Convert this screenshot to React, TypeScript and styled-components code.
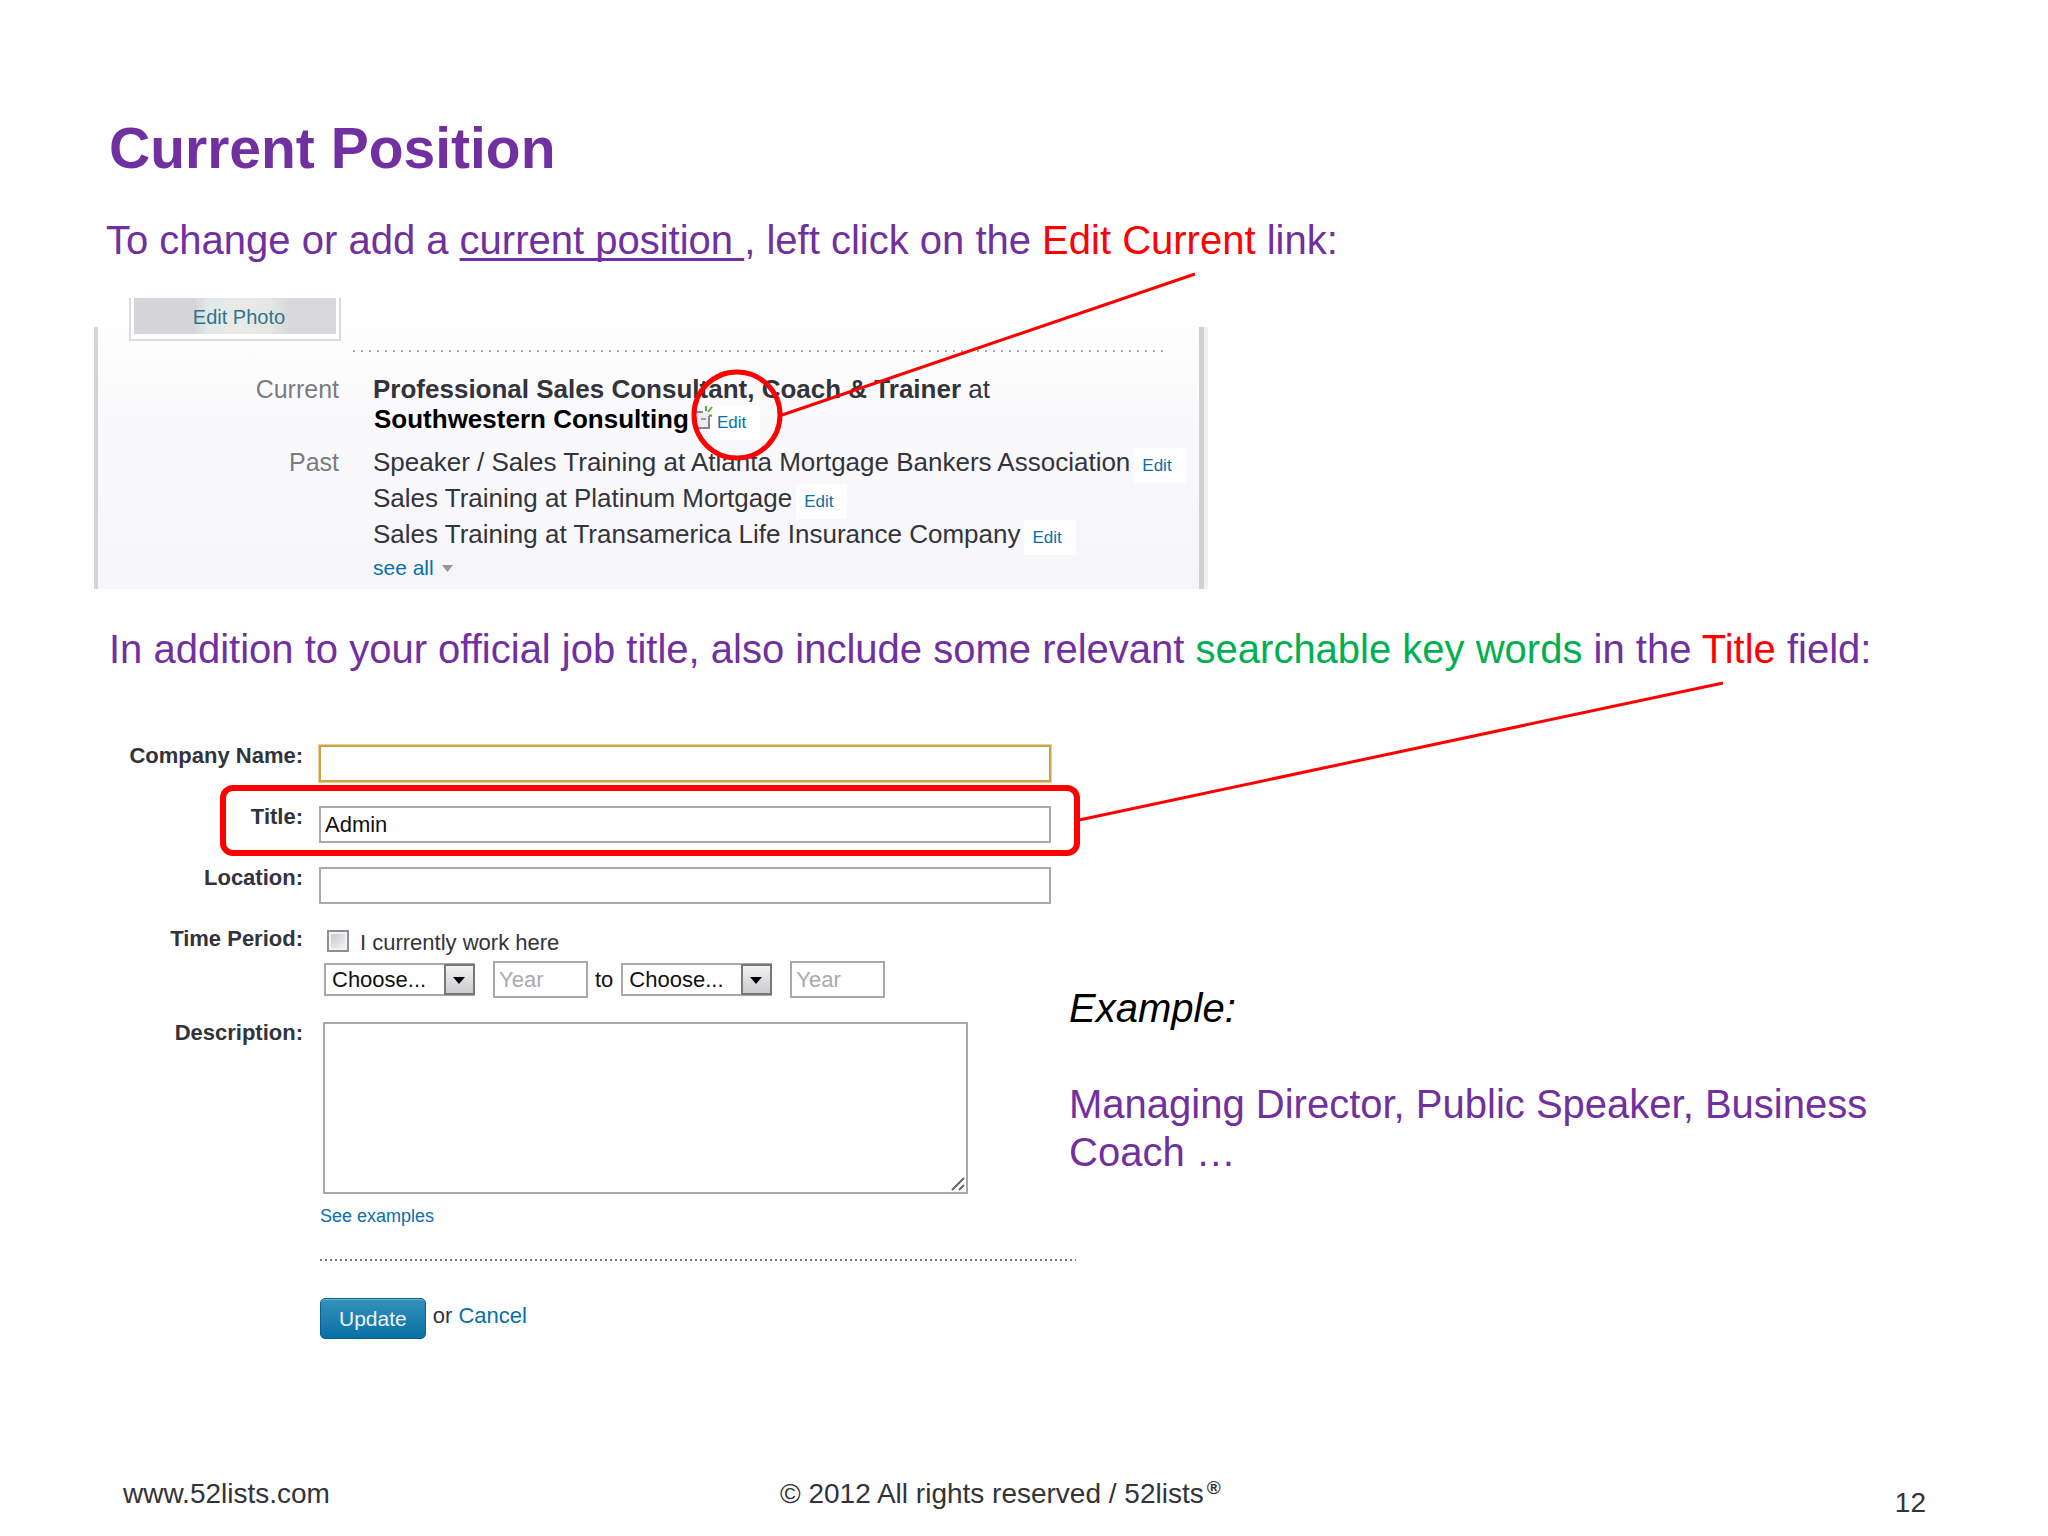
import React from "react";
import styled, { createGlobalStyle, css } from "styled-components";

const color = {
  purple: "#7030a0",
  red: "#ff0000",
  green: "#00b050",
  link: "#0a6fa8",
  ink: "#33333b",
  border: "#a9a9ad",
};

const GlobalStyle = createGlobalStyle`
  *, *::before, *::after { box-sizing: border-box; }
  body {
    margin: 0;
    background: #fefefe;
    font-family: "Liberation Sans", Arial, Helvetica, sans-serif;
  }
  input, select, textarea, button { font-family: inherit; }
`;

const Slide = styled.div`
  display: flex;
  flex-direction: column;
  min-height: 100vh;
  padding: 116px 120px 17px 106px;
`;

const Heading = styled.h1`
  margin: 0 0 36px;
  padding-left: 3px;
  font-size: 57px;
  line-height: 64px;
  font-weight: 700;
  color: ${color.purple};
`;

const Lead = styled.p<{ $indent?: boolean }>`
  margin: 0;
  padding-left: ${(p) => (p.$indent ? 3 : 0)}px;
  font-size: 40px;
  line-height: 48px;
  color: ${color.purple};
`;

const Tint = styled.span<{ $color: string }>`
  color: ${(p) => p.$color};
`;

const Underlined = styled.u`
  text-decoration-thickness: 3px;
  text-underline-offset: 4px;
  text-decoration-skip-ink: none;
  white-space: pre;
`;

/* ---------- profile card ---------- */

const Card = styled.section`
  position: relative;
  width: 1110px;
  margin: 63px 0 36px -12px;
  padding-bottom: 5px;
  border-left: 4px solid #d4d4d7;
  border-right: 5px solid #d0d0d3;
  background: linear-gradient(#fefefe, #fafafc 30%, #f6f6f9);
  box-shadow: 4px 0 0 #f1f1f4;
`;

const PhotoFrame = styled.div`
  width: 212px;
  height: 43px;
  margin: -29px 0 9px 31px;
  padding: 0 3px 5px;
  border: 2px solid #dcdcde;
  border-top: 0;
  background: #fefefe;
`;

const PhotoButton = styled.button`
  display: block;
  width: 100%;
  height: 36px;
  padding: 2px 0 0 8px;
  border: 0;
  background: linear-gradient(
    90deg,
    #d6d6d8 30%,
    #dfe9ea 36%,
    #ece9e6 52%,
    #e3e8e2 68%,
    #d9d9db 76%
  );
  font-size: 20px;
  line-height: 34px;
  color: #2f7390;
`;

const Dots = styled.hr<{ $step: number; $ink: string }>`
  height: 2px;
  margin: 0;
  border: 0;
  background: repeating-linear-gradient(
    90deg,
    ${(p) => p.$ink} 0 2px,
    transparent 2px ${(p) => p.$step}px
  );
`;

const CardDots = styled(Dots)`
  margin: 0 34px 0 255px;
`;

const Facts = styled.dl`
  display: grid;
  grid-template-columns: 241px 1fr;
  column-gap: 34px;
  row-gap: 10px;
  margin: 22px 0 0;
`;

const Term = styled.dt<{ $line: number }>`
  font-size: 25px;
  line-height: ${(p) => p.$line}px;
  text-align: right;
  color: #7b7b80;
`;

const Detail = styled.dd<{ $line: number }>`
  margin: 0;
  font-size: 26px;
  line-height: ${(p) => p.$line}px;
  color: ${color.ink};
  white-space: nowrap;
`;

const Company = styled.strong`
  padding-left: 1px;
  color: #000;
`;

const PageIcon = styled.svg`
  position: relative;
  z-index: 1;
  margin: 0 -8px 0 4px;
  vertical-align: -1px;
`;

const EditLink = styled.a`
  margin-left: 4px;
  padding: 8px 14px 8px 8px;
  background: #fefefe;
  font-size: 17px;
  line-height: 20px;
  color: ${color.link};
  text-decoration: none;
`;

const Link = styled.a<{ $size: number }>`
  font-size: ${(p) => p.$size}px;
  color: ${color.link};
  text-decoration: none;
`;

const SeeAll = styled.div`
  display: flex;
  align-items: center;
  gap: 8px;
  line-height: 32px;
`;

const overlay = css`
  position: absolute;
  z-index: 2;
  pointer-events: none;
`;

const EditCallout = styled.svg`
  ${overlay}
  left: 592px;
  top: -57px;
`;

/* ---------- position form ---------- */

const Columns = styled.div`
  display: grid;
  grid-template-columns: 963px minmax(0, 820px);
  margin-top: 70px;
`;

const Form = styled.form`
  display: flex;
  flex-direction: column;
  gap: 22px;
`;

const Row = styled.div`
  position: relative;
  display: grid;
  grid-template-columns: 197px 732px;
  column-gap: 16px;
  align-items: start;
`;

const labelText = css`
  font-size: 22px;
  line-height: 26px;
  font-weight: 700;
  text-align: right;
  color: ${color.ink};
`;

const Label = styled.label`
  ${labelText}
`;

const GroupLabel = styled.span`
  ${labelText}
`;

const TextInput = styled.input<{ $active?: boolean }>`
  width: 100%;
  height: 37px;
  margin-top: 2px;
  padding: 0 4px;
  border: 2px solid ${(p) => (p.$active ? "#c9a24d" : color.border)};
  background: #fff;
  box-shadow: ${(p) => (p.$active ? "0 0 0 1px #ecd08c" : "none")};
  font-size: 22px;
  color: #111;
  outline: none;
`;

const Highlight = styled.div`
  ${overlay}
  left: 114px;
  top: -19px;
  width: 860px;
  height: 71px;
  border: 6px solid ${color.red};
  border-radius: 13px;
`;

const TitleCallout = styled.svg`
  ${overlay}
  left: 972px;
  top: -123px;
`;

const Period = styled.div`
  padding: 4px 0 0 5px;
`;

const CheckLine = styled.div`
  display: flex;
  align-items: flex-start;
  gap: 11px;
  margin-bottom: 5px;
  padding-left: 3px;
  font-size: 22px;
  line-height: 26px;
  color: ${color.ink};
`;

const Check = styled.input`
  appearance: none;
  width: 22px;
  height: 22px;
  margin: 0;
  border: 2px solid #8f8f93;
  background: linear-gradient(135deg, #c4c6c8, #f6f6f6);
  box-shadow: inset 0 0 0 2px #f2f2f2;
`;

const Dates = styled.div`
  display: flex;
  align-items: center;
  font-size: 22px;
  color: #111;
`;

const SelectBox = styled.div`
  position: relative;
  width: 151px;
  height: 33px;
`;

const Select = styled.select`
  appearance: none;
  width: 100%;
  height: 100%;
  padding: 0 34px 0 6px;
  border: 2px solid ${color.border};
  border-radius: 0;
  background: #fff;
  font-size: 22px;
  color: #111;
`;

const Drop = styled.svg`
  ${overlay}
  right: 0;
  top: 1px;
`;

const YearInput = styled.input`
  width: 95px;
  height: 37px;
  margin-left: 18px;
  padding: 0 4px;
  border: 2px solid ${color.border};
  background: #fff;
  font-size: 22px;
  color: #111;
  &::placeholder {
    color: #aaaaae;
    opacity: 1;
  }
`;

const To = styled.span`
  padding: 0 8px 0 7px;
`;

const AreaBox = styled.div`
  position: relative;
  width: 645px;
  height: 172px;
  margin: 2px 0 10px 4px;
`;

const Area = styled.textarea`
  display: block;
  width: 100%;
  height: 100%;
  padding: 6px;
  border: 2px solid ${color.border};
  background: #fff;
  font-size: 22px;
  resize: none;
`;

const Grip = styled.svg`
  ${overlay}
  right: 3px;
  bottom: 3px;
`;

const Help = styled.div`
  line-height: 24px;
  padding-left: 1px;
`;

const After = styled.div`
  width: 756px;
  margin: 8px 0 0 214px;
`;

const Actions = styled.div`
  display: flex;
  align-items: flex-start;
  gap: 7px;
  margin-top: 37px;
`;

const Update = styled.button`
  height: 41px;
  padding: 1px 18px 0;
  border: 1px solid #075f8c;
  border-radius: 5px;
  background: linear-gradient(#3591b9, #0870a5);
  box-shadow: inset 0 1px 0 #6fb3d0;
  font-size: 21px;
  color: #eef7fb;
`;

const Or = styled.span`
  padding-top: 5px;
  font-size: 22px;
  line-height: 26px;
  color: ${color.ink};
`;

const Example = styled.aside`
  padding-top: 241px;
  font-size: 40px;
  line-height: 48px;
`;

const ExampleTitle = styled.p`
  margin: 0 0 48px;
  font-style: italic;
  color: #000;
`;

const ExampleText = styled.p`
  margin: 0;
  color: ${color.purple};
`;

/* ---------- footer ---------- */

const Footer = styled.footer`
  display: grid;
  grid-template-columns: 657px 1fr auto;
  align-items: start;
  margin-top: auto;
  padding-left: 17px;
  font-size: 28px;
  line-height: 32px;
  color: #333338;
`;

const Mark = styled.sup`
  margin-left: 3px;
  font-size: 19px;
  line-height: 0;
  font-weight: 700;
  vertical-align: 9px;
`;

const PageNumber = styled.span`
  padding: 9px 2px 0 0;
`;

const months = ["January", "February", "March", "April", "May", "June"];

function MonthYear({ name }: { name: string }) {
  return (
    <>
      <SelectBox>
        <Select aria-label={`${name} month`} defaultValue="">
          <option value="">Choose...</option>
          {months.map((m) => (
            <option key={m}>{m}</option>
          ))}
        </Select>
        <Drop width="31" height="31" viewBox="0 0 31 31">
          <defs>
            <linearGradient id={`face-${name}`} x1="0" y1="0" x2="0" y2="1">
              <stop offset="0" stopColor="#f4f4f4" />
              <stop offset="1" stopColor="#c9c9cc" />
            </linearGradient>
          </defs>
          <rect x="1" y="1" width="29" height="29" fill={`url(#face-${name})`} stroke="#77777b" strokeWidth="2" />
          <path d="M9 13h12l-6 7z" fill="#000" />
        </Drop>
      </SelectBox>
      <YearInput aria-label={`${name} year`} placeholder="Year" />
    </>
  );
}

const past = [
  "Speaker / Sales Training at Atlanta Mortgage Bankers Association",
  "Sales Training at Platinum Mortgage",
  "Sales Training at Transamerica Life Insurance Company",
];

export default function App() {
  return (
    <>
      <GlobalStyle />
      <Slide>
        <Heading>Current Position</Heading>
        <Lead>
          To change or add a <Underlined>current position </Underlined>, left click on the{" "}
          <Tint $color={color.red}>Edit Current</Tint> link:
        </Lead>

        <Card>
          <PhotoFrame>
            <PhotoButton type="button">Edit Photo</PhotoButton>
          </PhotoFrame>
          <CardDots $step={8} $ink="#aaaaae" />
          <Facts>
            <Term $line={30}>Current</Term>
            <Detail $line={30}>
              <strong>Professional Sales Consultant, Coach &amp; Trainer</strong> at
              <br />
              <Company>Southwestern Consulting</Company>
              <PageIcon width="20" height="24" viewBox="0 0 20 24" fill="none">
                <path d="M3 8h12v14H3z" fill="#ececee" />
                <path d="M2 7h8M16 11v12H2" stroke="#85858a" strokeWidth="2" />
                <path d="M8 14h5" stroke="#a8a0a0" strokeWidth="2" />
                <path d="M13 1v5M19 2l-4 5M16 10l3 1" stroke="#5fa83c" strokeWidth="2" />
              </PageIcon>
              <EditLink href="#current">Edit</EditLink>
            </Detail>
            <Term $line={36}>Past</Term>
            <Detail $line={36}>
              {past.map((item) => (
                <div key={item}>
                  {item}
                  <EditLink href="#past">Edit</EditLink>
                </div>
              ))}
              <SeeAll>
                <Link href="#all" $size={21}>
                  see all
                </Link>
                <svg width="11" height="7" viewBox="0 0 11 7">
                  <path d="M0 0h11L5.500 7z" fill="#97979b" />
                </svg>
              </SeeAll>
            </Detail>
          </Facts>
          <EditCallout width="510" height="194" viewBox="0 0 510 194" fill="none" stroke={color.red}>
            <circle cx="47" cy="145" r="43" strokeWidth="5" />
            <path d="M92 145L505 4" strokeWidth="3" />
          </EditCallout>
        </Card>

        <Lead $indent>
          In addition to your official job title, also include some relevant{" "}
          <Tint $color={color.green}>searchable key words</Tint> in the{" "}
          <Tint $color={color.red}>Title</Tint> field:
        </Lead>

        <Columns>
          <Form onSubmit={(e) => e.preventDefault()}>
            <Row>
              <Label htmlFor="company">Company Name:</Label>
              <TextInput id="company" $active />
            </Row>
            <Row>
              <Label htmlFor="title">Title:</Label>
              <TextInput id="title" defaultValue="Admin" />
              <Highlight />
              <TitleCallout width="650" height="144" viewBox="0 0 650 144" fill="none">
                <path d="M1 139L645 2" stroke={color.red} strokeWidth="3" />
              </TitleCallout>
            </Row>
            <Row>
              <Label htmlFor="location">Location:</Label>
              <TextInput id="location" />
            </Row>
            <Row role="group" aria-labelledby="period">
              <GroupLabel id="period">Time Period:</GroupLabel>
              <Period>
                <CheckLine>
                  <Check type="checkbox" id="now" />
                  <label htmlFor="now">I currently work here</label>
                </CheckLine>
                <Dates>
                  <MonthYear name="start" />
                  <To>to</To>
                  <MonthYear name="end" />
                </Dates>
              </Period>
            </Row>
            <Row>
              <Label htmlFor="description">Description:</Label>
              <div>
                <AreaBox>
                  <Area id="description" />
                  <Grip width="14" height="14" viewBox="0 0 14 14" stroke="#66666a" strokeWidth="2">
                    <path d="M1 13L13 1M8 13l5-5" />
                  </Grip>
                </AreaBox>
                <Help>
                  <Link href="#examples" $size={18}>
                    See examples
                  </Link>
                </Help>
              </div>
            </Row>
            <After>
              <Dots $step={5} $ink="#77777b" />
              <Actions>
                <Update type="submit">Update</Update>
                <Or>
                  or{" "}
                  <Link href="#cancel" $size={22}>
                    Cancel
                  </Link>
                </Or>
              </Actions>
            </After>
          </Form>
          <Example>
            <ExampleTitle>Example:</ExampleTitle>
            <ExampleText>Managing Director, Public Speaker, Business Coach …</ExampleText>
          </Example>
        </Columns>

        <Footer>
          <span>www.52lists.com</span>
          <span>
            © 2012 All rights reserved / 52lists<Mark>®</Mark>
          </span>
          <PageNumber>12</PageNumber>
        </Footer>
      </Slide>
    </>
  );
}
